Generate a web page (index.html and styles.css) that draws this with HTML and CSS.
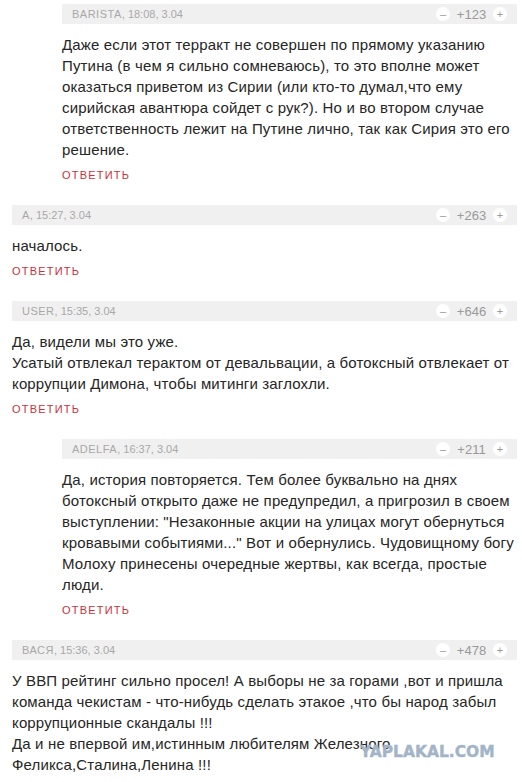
FILE: index.html
```html
<html>
<head>
<meta charset="utf-8">
<link rel="stylesheet" href="styles.css">
<title>Комментарии</title>
</head>
<body>
<div class="page">

<div class="comment nested">
  <div class="head">
    <span class="who"><span class="name">Barista</span>, 18:08, 3.04</span>
    <span class="vote"><span class="btn">&ndash;</span><span class="score">+123</span><span class="btn">+</span></span>
  </div>
  <div class="text">Даже если этот терракт не совершен по прямому указанию Путина (в чем я сильно сомневаюсь), то это вполне может оказаться приветом из Сирии (или кто-то думал,что ему сирийская авантюра сойдет с рук?). Но и во втором случае ответственность лежит на Путине лично, так как Сирия это его решение.</div>
  <a class="reply" href="#">ответить</a>
</div>

<div class="comment">
  <div class="head">
    <span class="who"><span class="name">A</span>, 15:27, 3.04</span>
    <span class="vote"><span class="btn">&ndash;</span><span class="score">+263</span><span class="btn">+</span></span>
  </div>
  <div class="text">началось.</div>
  <a class="reply" href="#">ответить</a>
</div>

<div class="comment">
  <div class="head">
    <span class="who"><span class="name">User</span>, 15:35, 3.04</span>
    <span class="vote"><span class="btn">&ndash;</span><span class="score">+646</span><span class="btn">+</span></span>
  </div>
  <div class="text">Да, видели мы это уже.<br>Усатый отвлекал терактом от девальвации, а ботоксный отвлекает от коррупции Димона, чтобы митинги заглохли.</div>
  <a class="reply" href="#">ответить</a>
</div>

<div class="comment nested">
  <div class="head">
    <span class="who"><span class="name">Adelfa</span>, 16:37, 3.04</span>
    <span class="vote"><span class="btn">&ndash;</span><span class="score">+211</span><span class="btn">+</span></span>
  </div>
  <div class="text">Да, история повторяется. Тем более буквально на днях ботоксный открыто даже не предупредил, а пригрозил в своем выступлении: "Незаконные акции на улицах могут обернуться кровавыми событиями..." Вот и обернулись. Чудовищному богу Молоху принесены очередные жертвы, как всегда, простые люди.</div>
  <a class="reply" href="#">ответить</a>
</div>

<div class="comment">
  <div class="head">
    <span class="who"><span class="name">Вася</span>, 15:36, 3.04</span>
    <span class="vote"><span class="btn">&ndash;</span><span class="score">+478</span><span class="btn">+</span></span>
  </div>
  <div class="text">У ВВП рейтинг сильно просел! А выборы не за горами ,вот и пришла команда чекистам - что-нибудь сделать этакое ,что бы народ забыл коррупционные скандалы !!!<br>Да и не впервой им,истинным любителям Железного Феликса,Сталина,Ленина !!!</div>
</div>

<div class="watermark">YAPLAKAL.COM</div>
</div>
</body>
</html>
```

FILE: styles.css
```css
/* page */
body {
  margin: 0;
  background: #fff;
  font-family: "Liberation Sans", Arial, sans-serif;
}

.page {
  position: relative;
  padding: 4px 5px 0 12px;
}

/* one comment */
.comment {
  margin-bottom: 22px;
}

.comment.nested {
  margin-left: 50px;
}

/* grey bar with author and rating */
.head {
  display: flex;
  align-items: center;
  justify-content: space-between;
  height: 20px;
  padding: 0 10px;
  background-color: #f0f0f0;
}

.who {
  font-size: 11px;
  line-height: 20px;
  color: #a8a8a8;
  text-transform: uppercase;
}

.who .name {
  letter-spacing: 0.5px;
}

.vote {
  display: flex;
  align-items: center;
}

.vote .btn {
  width: 14px;
  height: 14px;
  border-radius: 50%;
  background: #fff;
  color: #999;
  font-size: 11px;
  line-height: 14px;
  text-align: center;
}

.vote .score {
  min-width: 43px;
  text-align: center;
  font-size: 13px;
  color: #999;
}

/* comment body */
.text {
  margin-top: 10px;
  font-size: 15px;
  line-height: 21px;
  letter-spacing: 0.15px;
  color: #262626;
}

.reply {
  display: block;
  margin-top: 8px;
  font-size: 11px;
  line-height: 15px;
  letter-spacing: 1.2px;
  color: #c8323a;
  text-transform: uppercase;
  text-decoration: none;
}

/* site stamp over the picture */
.watermark {
  position: absolute;
  left: 360px;
  top: 745px;
  font-family: "DejaVu Sans", sans-serif;
  font-weight: bold;
  font-size: 15.5px;
  line-height: 15px;
  color: #a3b4c8;
  -webkit-text-stroke: 0.4px #a3b4c8;
}
```
